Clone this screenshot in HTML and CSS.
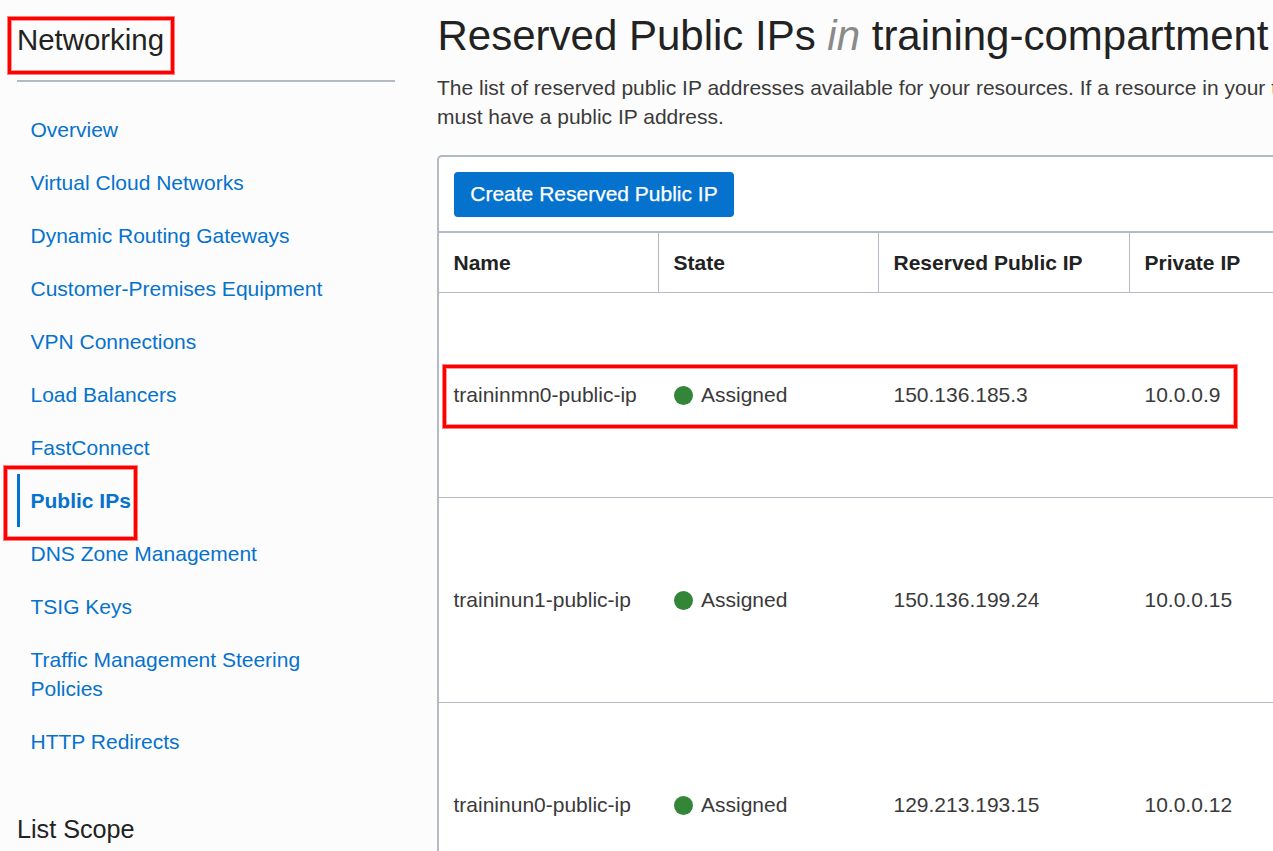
FILE: index.html
```html
<!DOCTYPE html>
<html lang="en">
<head>
<meta charset="utf-8">
<title>Reserved Public IPs</title>
<link rel="stylesheet" href="styles.css">
</head>
<body>
<div class="page">
  <aside class="sidebar">
    <h2 class="side-title">Networking</h2>
    <nav class="nav">
      <a class="link">Overview</a>
      <a class="link">Virtual Cloud Networks</a>
      <a class="link">Dynamic Routing Gateways</a>
      <a class="link">Customer-Premises Equipment</a>
      <a class="link">VPN Connections</a>
      <a class="link">Load Balancers</a>
      <a class="link">FastConnect</a>
      <a class="link active">Public IPs</a>
      <a class="link">DNS Zone Management</a>
      <a class="link">TSIG Keys</a>
      <a class="link">Traffic Management Steering<br>Policies</a>
      <a class="link">HTTP Redirects</a>
    </nav>
    <h3 class="scope">List Scope</h3>
  </aside>
  <main class="main">
    <h1 class="title">Reserved Public IPs <em>in</em> training-compartment</h1>
    <p class="desc">The list of reserved public IP addresses available for your resources. If a resource in your t<br>must have a public IP address.</p>
    <section class="panel">
      <div class="toolbar"><button class="create">Create Reserved Public IP</button></div>
      <div class="row head"><div>Name</div><div>State</div><div>Reserved Public IP</div><div>Private IP</div></div>
      <div class="row"><div>traininmn0-public-ip</div><div><i class="dot"></i>Assigned</div><div>150.136.185.3</div><div>10.0.0.9</div></div>
      <div class="row"><div>traininun1-public-ip</div><div><i class="dot"></i>Assigned</div><div>150.136.199.24</div><div>10.0.0.15</div></div>
      <div class="row"><div>traininun0-public-ip</div><div><i class="dot"></i>Assigned</div><div>129.213.193.15</div><div>10.0.0.12</div></div>
    </section>
  </main>
  <div class="mark mark-title"></div>
  <div class="mark mark-nav"></div>
  <div class="mark mark-row"></div>
</div>
</body>
</html>
```
FILE: styles.css
```css
* { box-sizing: border-box; }
body { margin: 0; background: #fcfcfc; font-family: "Liberation Sans", Arial, sans-serif; font-size: 21px; line-height: 29px; color: #3a3a3a; }
.page { position: relative; display: flex; width: 1273px; height: 851px; overflow: hidden; }
.sidebar { flex: 0 0 437px; padding: 0 42px 0 17px; }
.side-title { margin: 0; height: 82px; padding-top: 22px; border-bottom: 2px solid #b3b9c5; font-size: 29.4px; line-height: 36px; font-weight: 400; color: #222; }
.nav { display: flex; flex-direction: column; padding-top: 21px; }
.link { padding: 12px 0 12px 13.5px; color: #0572ce; white-space: nowrap; }
.active { padding-left: 10.5px; border-left: 3px solid #0572ce; font-weight: 700; }
.scope { margin: 46px 0 0; font-size: 25.2px; line-height: 30px; font-weight: 400; color: #222; }
.main { flex: none; width: 836px; }
.title { margin: 0; padding: 10px 0 0 .5px; height: 73px; font-size: 42px; line-height: 52px; font-weight: 400; color: #222; white-space: nowrap; }
.title em { color: #8a8a8a; }
.desc { margin: 0; height: 82px; white-space: nowrap; }
.panel { border: 2px solid #b3b9c5; border-right: 0; border-radius: 5px 0 0 0; background: #fff; height: 720px; }
.toolbar { height: 76px; padding: 15px; border-bottom: 2px solid #b3b9c5; }
.create { width: 280px; height: 45px; border: 0; border-radius: 4px; padding: 0 0 2px; background: #0572ce; color: #fff; font: inherit; -webkit-text-stroke: .25px #fff; }
.row { display: grid; grid-template-columns: 220px 220px 251px 1fr; height: 205px; border-bottom: 1px solid #b3b9c5; }
.row > div { display: flex; align-items: center; padding: 0 0 2px 14.5px; white-space: nowrap; }
.head { height: 60px; font-weight: 700; color: #222; }
.row.head > div { padding-bottom: 0; }
.head > div:not(:last-child) { border-right: 1px solid #b3b9c5; }
.dot { width: 19px; height: 19px; border-radius: 50%; background: #338538; margin: 2px 8px 0 .5px; }
.mark { position: absolute; border: 3px solid #f00; box-shadow: 0 0 0 1px rgba(255, 0, 0, .5), inset 0 0 0 1px rgba(255, 0, 0, .4); }
.mark-title { left: 8px; top: 17px; width: 166px; height: 57px; }
.mark-nav { left: 4px; top: 466px; width: 133px; height: 74px; }
.mark-row { left: 443px; top: 365px; width: 794px; height: 63px; }
```
